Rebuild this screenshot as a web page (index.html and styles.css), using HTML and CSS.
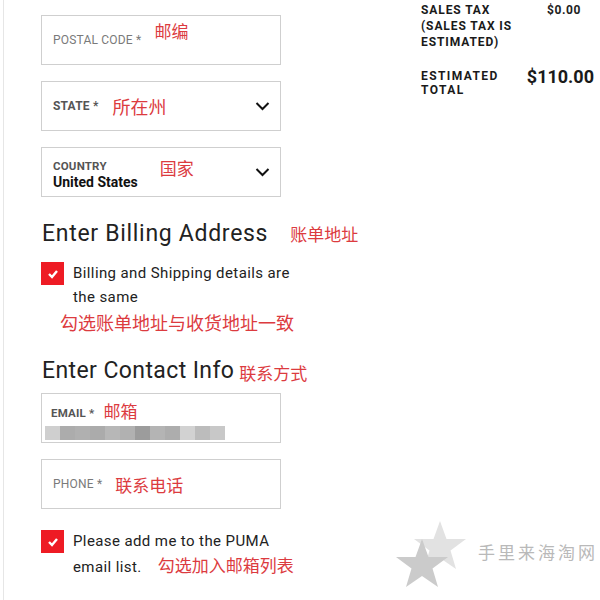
FILE: index.html
```html
<!DOCTYPE html>
<html>
<head>
<meta charset="utf-8">
<link rel="stylesheet" href="styles.css">
</head>
<body>
<div class="page">
  <div class="form">
    <div class="field">
      <span class="label">POSTAL CODE *</span>
      <span class="note note-postal">邮编</span>
    </div>
    <div class="field select">
      <span class="label strong">STATE *</span>
      <span class="note note-state">所在州</span>
      <svg class="chev" width="15" height="10" viewBox="0 0 15 10"><polyline points="1.5,2 7.5,8 13.5,2" fill="none" stroke="#111" stroke-width="2"/></svg>
    </div>
    <div class="field select stacked">
      <div class="stack">
        <span class="label strong small">COUNTRY</span>
        <span class="value">United States</span>
      </div>
      <span class="note note-country">国家</span>
      <svg class="chev" width="15" height="10" viewBox="0 0 15 10"><polyline points="1.5,2 7.5,8 13.5,2" fill="none" stroke="#111" stroke-width="2"/></svg>
    </div>

    <h2 class="heading billing">Enter Billing Address <span class="note note-h1">账单地址</span></h2>
    <div class="check">
      <span class="box"><svg width="12" height="10" viewBox="0 0 12 10"><polyline points="2,5 5,8 10,2" fill="none" stroke="#fff" stroke-width="2.4"/></svg></span>
      <span class="check-text">Billing and Shipping details are<br>the same</span>
    </div>
    <div class="note note-line">勾选账单地址与收货地址一致</div>

    <h2 class="heading contact">Enter Contact Info <span class="note note-h2">联系方式</span></h2>
    <div class="field stacked email">
      <div class="stack">
        <div class="label-row"><span class="label strong small">EMAIL *</span><span class="note note-email">邮箱</span></div>
        <span class="blur"></span>
      </div>
    </div>
    <div class="field">
      <span class="label">PHONE *</span>
      <span class="note note-phone">联系电话</span>
    </div>
    <div class="check check2">
      <span class="box"><svg width="12" height="10" viewBox="0 0 12 10"><polyline points="2,5 5,8 10,2" fill="none" stroke="#fff" stroke-width="2.4"/></svg></span>
      <span class="check-text">Please add me to the PUMA<br>email list. <span class="note note-list">勾选加入邮箱列表</span></span>
    </div>
  </div>

  <div class="summary">
    <div class="row">
      <span class="s-label">SALES TAX<br>(SALES TAX IS<br>ESTIMATED)</span>
      <span class="s-value">$0.00</span>
    </div>
    <div class="row total">
      <span class="s-label">ESTIMATED<br>TOTAL</span>
      <span class="t-value">$110.00</span>
    </div>
  </div>

  <div class="watermark">
    <svg width="76" height="70" viewBox="0 0 76 70">
      <polygon points="44,2 50.5,20 70,20 54.5,31.5 60,50 44,39 28,50 33.5,31.5 18,20 37.5,20" fill="#e2e2e2"/>
      <polygon points="26,20 32.5,38 52,38 36.5,49.5 42,68 26,57 10,68 15.5,49.5 0,38 19.5,38" fill="#cbcbcb"/>
    </svg>
    <span class="wm-text">手里来海淘网</span>
  </div>
</div>
</body>
</html>
```
FILE: styles.css
```css
html, body {
  margin: 0;
  padding: 0;
  background: #fff;
}
body {
  font-family: Roboto, "Noto Sans CJK SC", sans-serif;
  color: #222;
  width: 600px;
  height: 600px;
  overflow: hidden;
}
.page {
  position: relative;
  display: flex;
  margin-left: 3px;
  border-left: 1px solid #e6e6e6;
  height: 600px;
}
.form {
  width: 240px;
  margin-left: 37px;
  padding-top: 15px;
  display: flex;
  flex-direction: column;
}
.form > * { flex-shrink: 0; }
.field {
  box-sizing: border-box;
  height: 50px;
  border: 1px solid #cfcfcf;
  display: flex;
  align-items: center;
  padding-left: 11px;
  margin-bottom: 16px;
  position: relative;
}
.label {
  font-size: 12px;
  color: #7a7a7a;
  letter-spacing: 0.2px;
}
.label.strong {
  font-weight: 700;
  color: #555;
}
.label.small {
  font-size: 11.5px;
}
.note {
  font-family: "Noto Sans CJK SC", sans-serif;
  color: #dc3b3f;
  font-size: 17px;
  font-weight: 400;
  letter-spacing: 0;
  white-space: nowrap;
}
.note-postal { margin-left: 13px; position: relative; top: -10px; }
.note-state { margin-left: 14px; font-size: 18px; }
.note-country { margin-left: 22px; margin-top: 7px; }
.chev {
  position: absolute;
  right: 10px;
  top: 19px;
}
.stacked { align-items: flex-start; }
.stack {
  display: flex;
  flex-direction: column;
  padding-top: 11px;
}
.stack .value {
  font-size: 14px;
  font-weight: 700;
  color: #111;
  margin-top: 1px;
}
.heading {
  margin: 0;
  font-weight: 400;
  font-size: 23px;
  color: #222;
  letter-spacing: 0.7px;
  display: flex;
  align-items: center;
  white-space: nowrap;
  margin-left: 1px;
}
.billing { margin-top: 3px; height: 34px; }
.note-h1 { margin-left: 22px; font-size: 17px; }
.contact { margin-top: 18px; height: 34px; margin-bottom: 6px; letter-spacing: 0.4px; }
.note-h2 { margin-left: 5px; font-size: 17px; position: relative; top: 2px; }
.check {
  display: flex;
  gap: 9px;
  margin-top: 12px;
}
.box {
  flex: none;
  width: 23px;
  height: 23px;
  background: #ee1b24;
  display: flex;
  align-items: center;
  justify-content: center;
}
.check-text {
  font-size: 15px;
  line-height: 24px;
  color: #222;
  margin-top: -1px;
  white-space: nowrap;
  flex-shrink: 0;
  letter-spacing: 0.4px;
}
.note-line {
  margin-left: 19px;
  font-size: 18px;
  margin-top: 0;
}
.email { padding-left: 9px; }
.email .stack { padding-top: 6px; }
.label-row { display: flex; align-items: center; }
.note-email { margin-left: 9px; position: relative; top: -2px; }
.blur {
  display: block;
  width: 180px;
  height: 14px;
  margin-left: -6px;
  margin-top: 1px;
  background: linear-gradient(to right,
    #cfcfcf 0 15px, #acacac 15px 30px, #b0b0b0 30px 45px, #ababab 45px 60px,
    #b7b7b7 60px 75px, #b1b1b1 75px 90px, #9c9c9c 90px 105px, #b4b4b4 105px 120px,
    #adadad 120px 135px, #d2d2d2 135px 150px, #bcbcbc 150px 165px, #c8c8c8 165px 180px);
}
.note-phone { margin-left: 13px; }
.check2 { margin-top: 5px; }
.note-list { margin-left: 12px; font-size: 17px; }

.summary {
  margin-left: 140px;
  width: 173px;
  padding-top: 2px;
}
.row {
  display: flex;
  justify-content: space-between;
  align-items: flex-start;
}
.s-label {
  font-size: 12px;
  font-weight: 700;
  letter-spacing: 0.9px;
  line-height: 16px;
  color: #1a1a1a;
}
.s-value {
  font-size: 12px;
  font-weight: 700;
  letter-spacing: 0.6px;
  line-height: 16px;
  margin-right: 13px;
}
.total { margin-top: 19px; }
.total .s-label { line-height: 14px; letter-spacing: 1.4px; }
.t-value {
  font-size: 18px;
  font-weight: 700;
  color: #1a1a1a;
  line-height: 20px;
  margin-top: -2px;
  letter-spacing: 0;
}
.watermark {
  position: absolute;
  left: 392px;
  top: 519px;
  display: flex;
  align-items: center;
  gap: 6px;
}
.wm-text {
  font-family: "Noto Sans CJK SC", serif;
  font-size: 17px;
  color: #b9b9b9;
  letter-spacing: 3px;
  margin-top: -6px;
}
```
